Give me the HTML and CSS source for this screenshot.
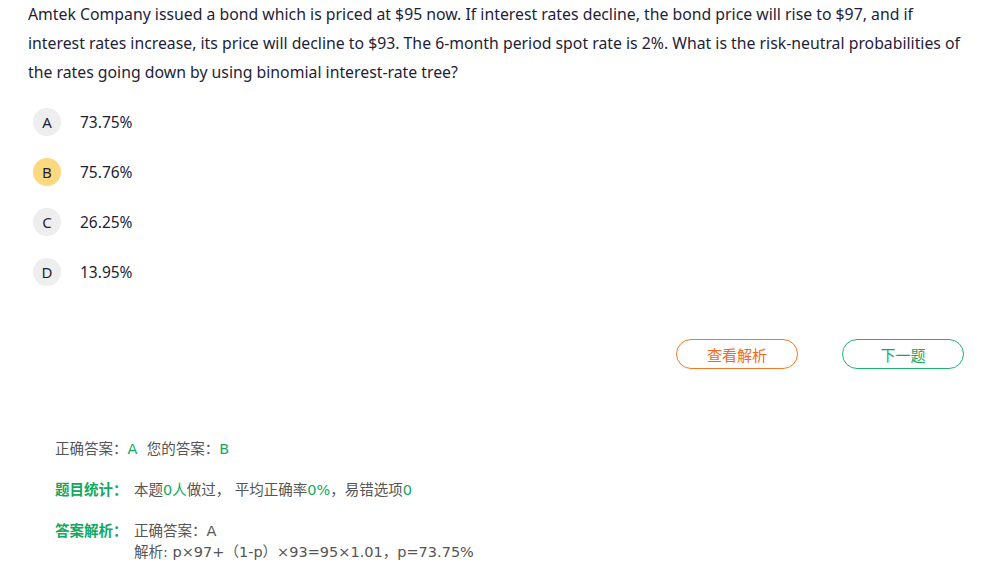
FILE: index.html
```html
<!DOCTYPE html>
<html lang="zh">
<head>
<meta charset="utf-8">
<link rel="stylesheet" href="styles.css">
</head>
<body>
<div class="page">
  <p class="question">Amtek Company issued a bond which is priced at $95 now. If interest rates decline, the bond price will rise to $97, and if<br>interest rates increase, its price will decline to $93. The 6-month period spot rate is 2%. What is the risk-neutral probabilities of<br>the rates going down by using binomial interest-rate tree?</p>
  <ul class="options">
    <li class="option"><span class="badge">A</span><span class="opt-text">73.75%</span></li>
    <li class="option"><span class="badge selected">B</span><span class="opt-text">75.76%</span></li>
    <li class="option"><span class="badge">C</span><span class="opt-text">26.25%</span></li>
    <li class="option"><span class="badge">D</span><span class="opt-text">13.95%</span></li>
  </ul>
  <div class="actions">
    <button class="btn btn-orange">查看解析</button>
    <button class="btn btn-green">下一题</button>
  </div>
  <div class="result">
    <div class="row">正确答案：<span class="green">A</span>&nbsp;&nbsp;您的答案：<span class="green">B</span></div>
    <div class="row stat"><span class="label">题目统计：</span><span class="content">本题<span class="green">0人</span>做过， 平均正确率<span class="green">0%</span>，易错选项<span class="green">0</span></span></div>
    <div class="row stat"><span class="label">答案解析：</span><span class="content">正确答案：A<br>解析: p×97+（1-p）×93=95×1.01，p=73.75%</span></div>
  </div>
</div>
</body>
</html>
```
FILE: styles.css
```css
html, body {
  margin: 0;
  padding: 0;
  background: #fff;
}
body {
  font-family: "Noto Sans", "Noto Sans CJK SC", sans-serif;
  color: #222;
}
.page {
  padding: 0 25px 0 28px;
}
.question {
  margin: 0;
  font-size: 15.8px;
  line-height: 29px;
  color: #1e1e38;
  white-space: nowrap;
}
.options {
  list-style: none;
  margin: 21px 0 0 5px;
  padding: 0;
}
.option {
  display: flex;
  align-items: center;
  height: 28px;
  margin-bottom: 22px;
}
.badge {
  width: 28px;
  height: 28px;
  border-radius: 50%;
  background: #eeeeee;
  display: flex;
  align-items: center;
  justify-content: center;
  font-size: 15px;
  color: #1e1e38;
  margin-right: 19px;
}
.badge.selected {
  background: #fad97f;
}
.opt-text {
  font-size: 15.5px;
  color: #1e1e38;
}
.actions {
  display: flex;
  justify-content: flex-end;
  gap: 44px;
  margin-top: 53px;
}
.btn {
  width: 122px;
  height: 30px;
  border-radius: 15px;
  background: #fff;
  font-family: "Noto Sans CJK SC", sans-serif;
  font-size: 15px;
  padding: 0;
  cursor: pointer;
}
.btn-orange {
  border: 1px solid #f57a23;
  color: #f56a14;
}
.btn-green {
  border: 1px solid #1cb36e;
  color: #12a85e;
}
.result {
  margin-top: 70px;
  padding-left: 27px;
  font-family: "DejaVu Sans", "Noto Sans CJK SC", sans-serif;
  font-size: 14.5px;
  color: #555;
}
.row {
  line-height: 21px;
  margin-bottom: 20px;
}
.stat {
  display: flex;
}
.label {
  width: 79px;
  flex: none;
  color: #12a85e;
  font-weight: bold;
}
.green {
  color: #12a85e;
}
```
